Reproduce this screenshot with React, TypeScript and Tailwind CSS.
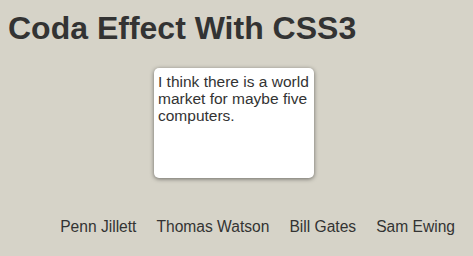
export default function App() {
  const names = ["Penn Jillett", "Thomas Watson", "Bill Gates", "Sam Ewing"];
  return (
    <div className="w-[473px] h-[256px] bg-[#d6d3c8] text-[#333] overflow-hidden" style={{ fontFamily: '"Liberation Sans", Arial, sans-serif' }}>
      <h1 className="text-[32px] font-bold leading-none pt-[12px] pl-[8px] text-[#333]">Coda Effect With CSS3</h1>
      <div className="flex justify-center pt-[24px] pr-[5px]">
        <div className="w-[160px] h-[110px] bg-white rounded-[5px] shadow-[0_1px_4px_rgba(0,0,0,0.5)] px-[4px] pt-[5px] text-[15.5px] leading-[17px] text-[#333]">
          I think there is a world market for maybe five computers.
        </div>
      </div>
      <ul className="flex justify-end gap-[20px] pr-[18px] pt-[40px] text-[15.6px] leading-[18px] text-[#333]">
        {names.map((n) => (
          <li key={n}>{n}</li>
        ))}
      </ul>
    </div>
  );
}
